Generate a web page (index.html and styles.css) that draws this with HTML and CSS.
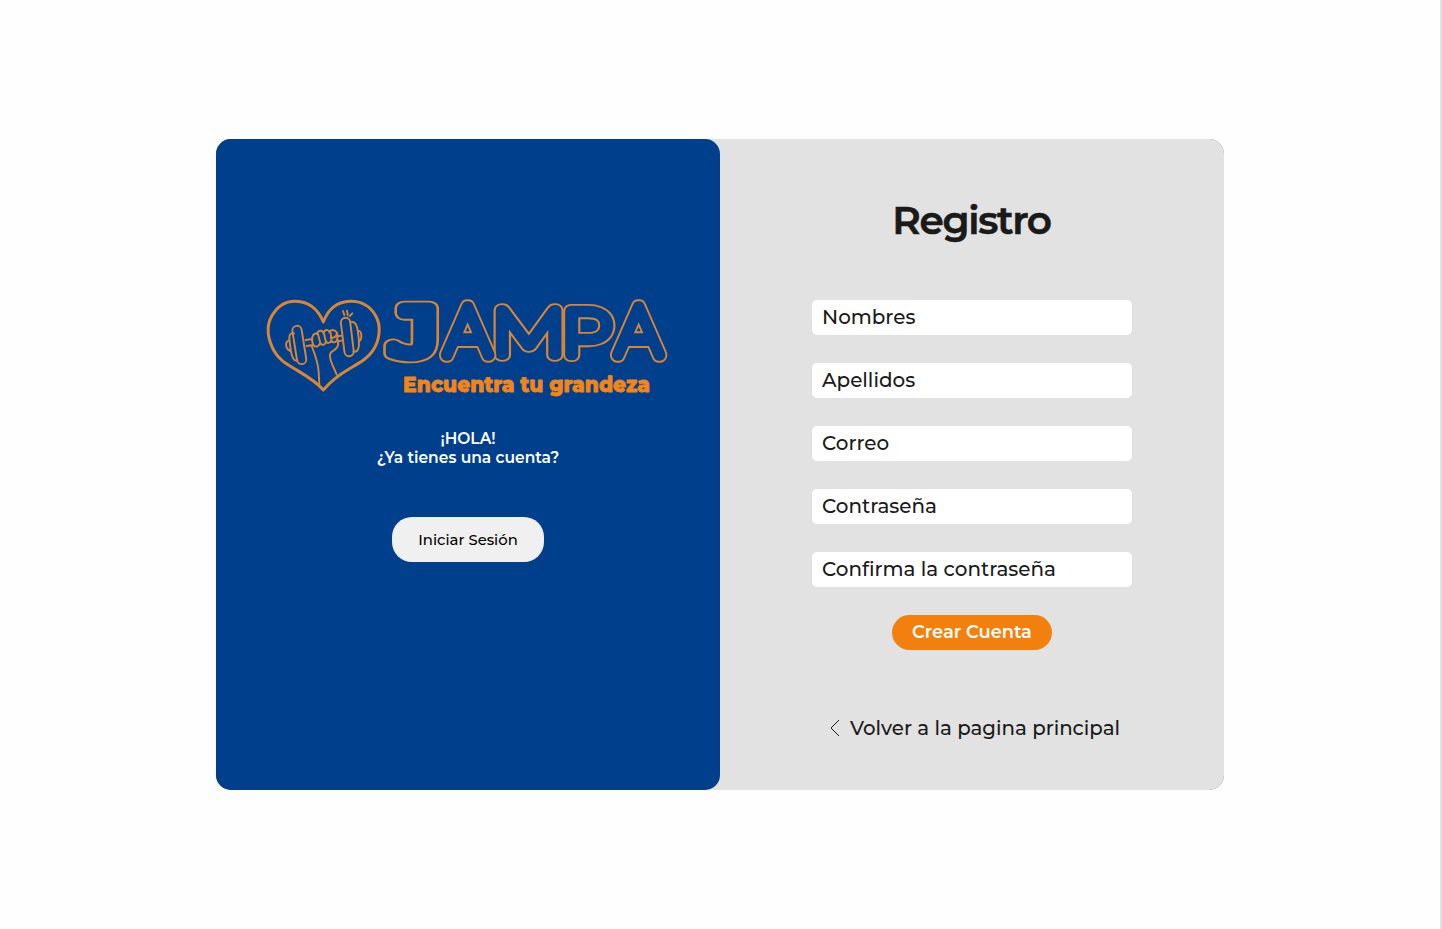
FILE: index.html
```html
<!DOCTYPE html>
<html lang="es">
<head>
<meta charset="utf-8">
<title>Jampa - Registro</title>
<link rel="stylesheet" href="styles.css">
</head>
<body>
<main class="card">
  <section class="welcome">
    <svg class="logo" viewBox="260 290 416 112" width="416" height="112" role="img">
      <g class="heart" transform="translate(256 290) scale(.3333)">
        <path class="heart-line" d="M202 300C184 279 160 263 125 242C92 222 70 211 54 182C36 150 28 109 48 77C66 47 91 33 119 34C156 35 185 55 202 96C217 56 246 35 283 34C315 33 343 49 359 77C377 108 371 151 351 181C334 207 310 219 279 237C245 257 222 276 202 300Z"/>
        <path d="M167 168C180 200 187 219 188 247L190 282M245 150C251 166 241 178 229 184C216 190 223 211 230 226L242 254"/>
        <rect x="116" y="107" width="28" height="116" rx="14" transform="rotate(-9 130 165)"/>
        <rect x="260" y="83" width="28" height="116" rx="14" transform="rotate(-7 274 141)"/>
        <path d="M114 130C100 127 98 139 101 155C104 183 108 217 124 211M100 152C86 154 87 177 104 183M149 150L169 147M152 168L172 165"/>
        <path d="M287 96C302 94 305 116 308 142C311 171 308 188 292 185M306 122C319 121 319 151 308 154M245 139L258 137M246 154L261 151"/>
        <path d="M170 159C164 136 177 125 186 133L193 159C185 174 173 173 170 159M183 131C188 118 201 120 204 132L210 156C207 165 196 168 193 159M203 128C208 116 220 119 224 130L227 151C223 160 213 162 209 153M220 127C228 113 247 123 244 139C247 155 235 162 224 153M224 143C233 145 239 142 242 132"/>
        <path class="spark" d="M261 63L265 75M273 62L275 75M289 70L281 78"/>
      </g>
      <g class="brand">
        <g transform="translate(388.500 355) scale(1.28 .95)"><text class="rim letter-j">J</text><text class="core letter-j">J</text></g>
        <g transform="translate(492.500 355) scale(1.08 .86)"><text class="rim letter-m">M</text><text class="core letter-m">M</text></g>
        <g transform="translate(561.500 355) scale(1.02 .9)"><text class="rim">P</text><text class="core">P</text></g>
        <g transform="translate(445.500 355) scale(.92 .99)"><text class="rim">A</text><text class="core">A</text></g>
        <g transform="translate(616.500 355) scale(.92 .99)"><text class="rim">A</text><text class="core">A</text></g>
      </g>
      <text class="tagline" x="403" y="392" textLength="247" lengthAdjust="spacingAndGlyphs">Encuentra tu grandeza</text>
    </svg>
    <p class="greeting"><span class="hola">¡HOLA!</span><br>¿Ya tienes una cuenta?</p>
    <button class="login" type="button">Iniciar Sesión</button>
  </section>
  <section class="register">
    <h1 class="title">Registro</h1>
    <form class="form">
      <input class="field" type="text" placeholder="Nombres">
      <input class="field" type="text" placeholder="Apellidos">
      <input class="field" type="email" placeholder="Correo">
      <input class="field" type="password" placeholder="Contraseña">
      <input class="field" type="password" placeholder="Confirma la contraseña">
      <button class="submit" type="button">Crear Cuenta</button>
    </form>
    <a class="back">
      <svg class="chevron" width="12" height="20" viewBox="0 0 12 20"><path d="M10 2L2 10L10 18"/></svg>
      <span>Volver a la pagina principal</span>
    </a>
  </section>
</main>
</body>
</html>
```
FILE: styles.css
```css
* { box-sizing: border-box; }
body {
  margin: 0;
  height: 929px;
  padding: 139px 0 0 216px;
  border-right: 2px solid #e2e2e2;
  background: #fefefe;
  color: #1a1a1a;
  font-family: Montserrat, Inter, sans-serif;
  overflow: hidden;
}
.card {
  display: flex;
  width: 1008px;
  height: 651px;
  border-radius: 15px;
  background: #777;
}
.welcome {
  position: relative;
  z-index: 1;
  display: flex;
  flex-direction: column;
  align-items: center;
  width: 504px;
  padding-top: 151px;
  border-radius: 15px;
  background: #003f8c;
}
.logo { display: block; overflow: visible; }
.heart { fill: none; stroke: #d98534; stroke-width: 5.800; stroke-linecap: round; stroke-linejoin: round; }
.heart-line { stroke-width: 9; }
.brand { font: 100 70px Montserrat, sans-serif; stroke-linejoin: round; }
.rim { fill: #d98534; stroke: #d98534; stroke-width: 15.500px; }
.core { fill: #003f8c; stroke: #003f8c; stroke-width: 11.400px; }
.letter-j { font: 400 68px "DejaVu Sans Mono", monospace; }
.letter-m { font: 100 75px Lato, sans-serif; }
.tagline { font: 800 22px Montserrat, sans-serif; fill: #f08519; stroke: #f08519; stroke-width: .800px; stroke-linejoin: round; }
.greeting {
  margin: 27px 0 50px;
  color: #fff;
  font-size: 15.500px;
  font-weight: 600;
  line-height: 19px;
  text-align: center;
}
.login {
  width: 152px;
  height: 45px;
  padding: 0;
  border: 0;
  border-radius: 20px;
  background: #f0f0f0;
  color: #000;
  font: 500 14.800px Montserrat, Inter, sans-serif;
}
.register {
  display: flex;
  flex-direction: column;
  align-items: center;
  width: 519px;
  margin-left: -15px;
  padding: 56px 0 0 15px;
  border-radius: 0 15px 15px 0;
  background: #e2e2e2;
}
.title {
  margin: 0 0 56px;
  font-size: 39px;
  font-weight: 600;
  letter-spacing: -1.300px;
  line-height: 50px;
  height: 49px;
  padding-right: 1px;
  -webkit-text-stroke: .6px #1a1a1a;
}
.form { display: flex; flex-direction: column; align-items: center; gap: 28px; }
.field {
  width: 320px;
  height: 35px;
  padding: 0 10px 2px;
  border: 0;
  border-radius: 5px;
  background: #fff;
  font: 500 19.900px Montserrat, Inter, sans-serif;
}
.field::placeholder { color: #1a1a1a; opacity: 1; }
.submit {
  width: 160px;
  height: 35px;
  padding: 0 0 2px;
  border: 0;
  border-radius: 18px;
  background: #f3800d;
  color: #fff;
  font: 600 17.800px Montserrat, Inter, sans-serif;
}
.back {
  display: flex;
  align-items: center;
  gap: 9px;
  height: 26px;
  margin-top: 65px;
  padding-left: 5px;
  font-size: 19.800px;
  font-weight: 500;
}
.chevron { fill: none; stroke: #1a1a1a; stroke-width: 1; }
```
